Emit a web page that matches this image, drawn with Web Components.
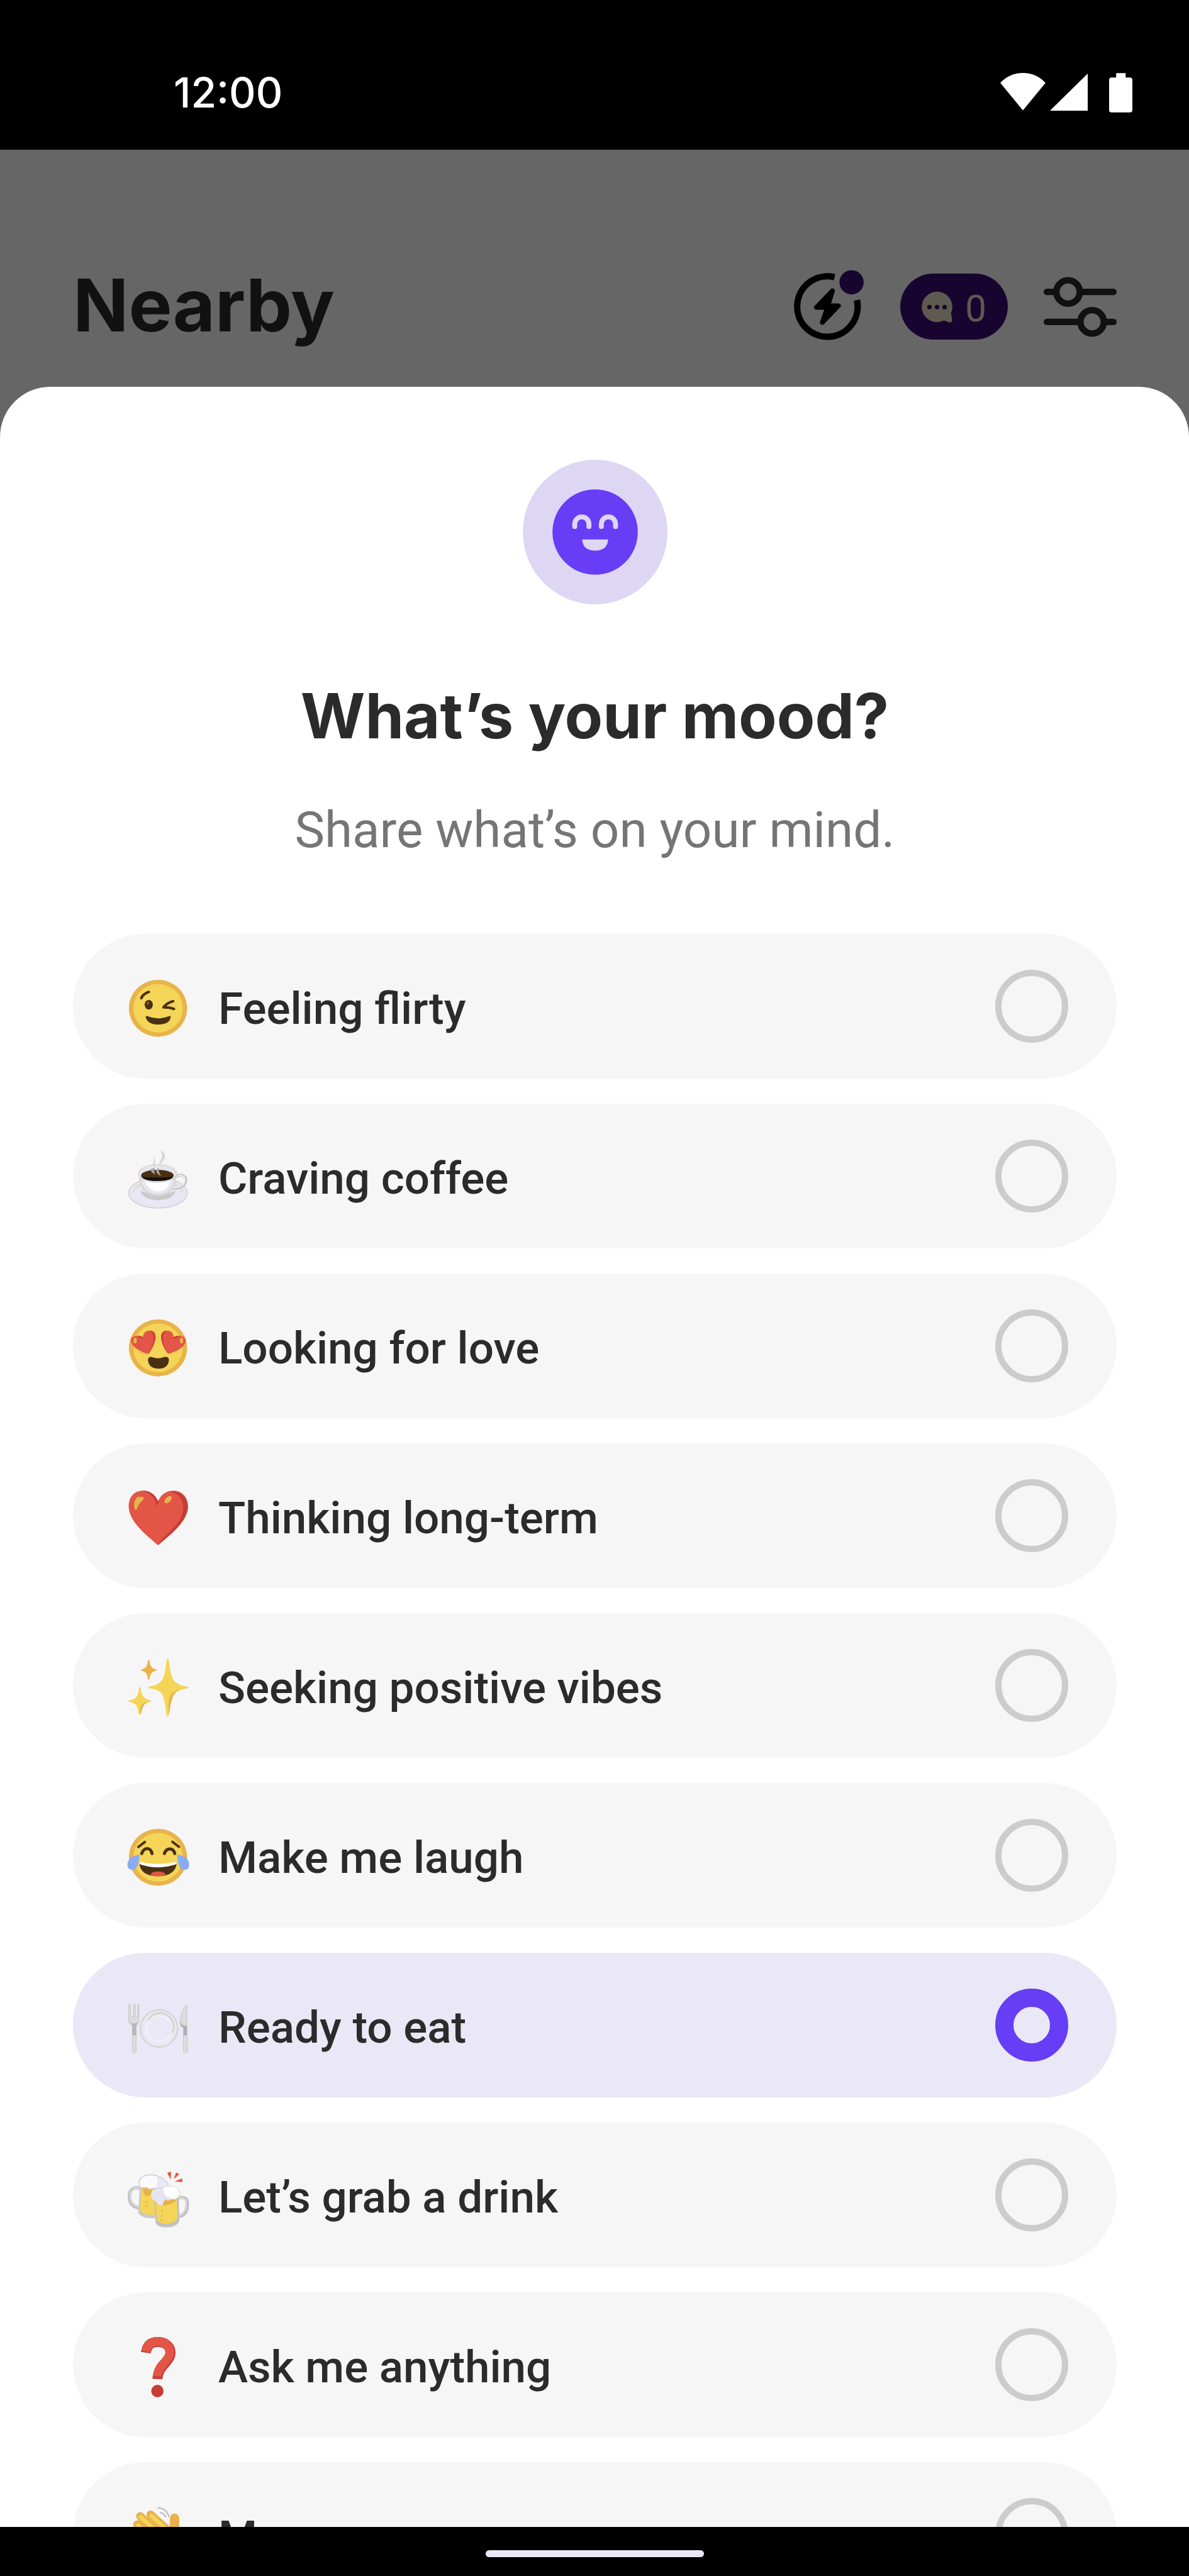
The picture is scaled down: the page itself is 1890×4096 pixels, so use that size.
<!DOCTYPE html>
<html lang="en">
<head>
<meta charset="utf-8">
<meta name="viewport" content="width=device-width, initial-scale=1">
<title>Nearby</title>
<style>
  html, body {
    margin: 0;
    height: 100%;
    background: #000;
  }

  body {
    font-family: Roboto, "Liberation Sans", sans-serif;
    color: #2b2b2b;
  }
</style>
</head>
<body>

<mood-app>
  <status-bar slot="status">12:00</status-bar>
  <nearby-header slot="header" count="0">Nearby</nearby-header>

  <mood-sheet>
    <span slot="title">What’s your mood?</span>
    <span slot="subtitle">Share what’s on your mind.</span>

    <mood-list>
      <mood-option><mood-emoji slot="icon" name="wink"></mood-emoji>Feeling flirty</mood-option>
      <mood-option><mood-emoji slot="icon" name="coffee"></mood-emoji>Craving coffee</mood-option>
      <mood-option><mood-emoji slot="icon" name="heart-eyes"></mood-emoji>Looking for love</mood-option>
      <mood-option><mood-emoji slot="icon" name="heart"></mood-emoji>Thinking long-term</mood-option>
      <mood-option><mood-emoji slot="icon" name="sparkles"></mood-emoji>Seeking positive vibes</mood-option>
      <mood-option><mood-emoji slot="icon" name="laugh"></mood-emoji>Make me laugh</mood-option>
      <mood-option checked><mood-emoji slot="icon" name="plate"></mood-emoji>Ready to eat</mood-option>
      <mood-option><mood-emoji slot="icon" name="beers"></mood-emoji>Let’s grab a drink</mood-option>
      <mood-option><mood-emoji slot="icon" name="question"></mood-emoji>Ask me anything</mood-option>
      <mood-option><mood-emoji slot="icon" name="wave"></mood-emoji>M</mood-option>
    </mood-list>
  </mood-sheet>

  <home-indicator slot="nav"></home-indicator>
</mood-app>

<script>
const FACE = `
  <ellipse cx="150" cy="150" rx="141" ry="138" fill="#e8b34a"/>
  <ellipse cx="150" cy="150" rx="120" ry="118" fill="#f4d557"/>`;

const HEART_EYE = `
  <path d="M105 179C75 172 20 150 19 115C18 92 50 85 78 98C76 74 100 62 120 68C152 80 138 130 105 179Z" fill="#e25547"/>
  <path d="M105 179C138 130 152 80 120 68L110 66C134 78 132 110 124 135Q118 155 105 179Z" fill="#c63d35"/>
  <path d="M50 91Q64 90 78 98L80 104Q70 108 50 91Z" fill="#c63d35"/>
  <ellipse cx="39" cy="115" rx="8" ry="14" fill="#e8b34a"/>`;

const TEAR = `<path d="M60 138C58 170 54 211 23 211C10 211 2 201 2 186C2 160 22 140 60 138Z" fill="#8babf1"/>`;

// every emoji is drawn on a 305 x 305 board
const EMOJI = {
  wink: `${FACE}
    <path d="M69 101Q78 80 105 71" fill="none" stroke="#4a3013" stroke-width="13" stroke-linecap="round"/>
    <ellipse cx="105" cy="133" rx="20" ry="23" fill="#4a3013"/>
    <ellipse cx="101" cy="125" rx="5" ry="7" fill="#8a6a3a"/>
    <path d="M223 116Q197 122 177 145Q205 144 227 153" fill="none" stroke="#4a3013" stroke-width="13" stroke-linecap="round" stroke-linejoin="round"/>
    <path d="M91 196Q88 184 101 189Q150 209 201 189Q214 184 211 197Q203 229 151 229Q101 229 91 196Z" fill="#4a3013"/>`,

  coffee: `
    <path d="M165 19C192 34 182 58 164 76Q152 90 150 110C150 82 172 60 172 42Q172 30 165 19Z" fill="#d6d6d4" stroke="#d6d6d4" stroke-width="4"/>
    <path d="M128 49C144 58 134 80 133 100L124 100C122 78 134 68 128 49Z" fill="#dcdcdc"/>
    <ellipse cx="150" cy="222" rx="142" ry="73" fill="#e9e7f4" stroke="#d0d0d0" stroke-width="5"/>
    <ellipse cx="150" cy="214" rx="122" ry="55" fill="#dededc"/>
    <ellipse cx="150" cy="224" rx="117" ry="48" fill="#e9e7f4"/>
    <path d="M64 212Q150 245 236 212Q220 257 150 257Q80 257 64 212Z" fill="#c9c9c9"/>
    <path d="M232 145C262 126 288 140 284 166C280 190 250 200 222 201" fill="none" stroke="#c4c4c4" stroke-width="14"/>
    <path d="M232 145C262 128 284 142 280 164C276 186 250 196 222 198" fill="none" stroke="#ececf2" stroke-width="6"/>
    <path d="M55 125L61 170Q74 236 150 236Q222 236 235 170L241 125Z" fill="#d8d8d6"/>
    <path d="M68 160Q84 225 150 228Q212 225 228 160Z" fill="#e9e7f4"/>
    <path d="M88 164Q104 214 150 214Q196 214 208 164Z" fill="#fff"/>
    <ellipse cx="148" cy="128" rx="92" ry="43" fill="#e6e5ee" stroke="#d2d2d2" stroke-width="4"/>
    <ellipse cx="147" cy="137" rx="79" ry="27" fill="#4a3013"/>
    <path d="M70 143Q147 152 224 143Q210 164 147 164Q84 164 70 143Z" fill="#131110"/>
    <path d="M112 108Q118 124 136 133Q130 118 132 100M140 112Q142 132 166 141Q152 126 154 100" fill="#a6a29c"/>`,

  'heart-eyes': `${FACE}
    <path d="M50 165Q75 186 105 179Z" fill="#e8b34a"/>
    ${HEART_EYE}
    <g transform="matrix(-1 0 0 1 303 0)">${HEART_EYE}</g>
    <path d="M101 208Q104 190 122 195Q151 206 182 194Q202 192 203 208Q200 251 151 251Q104 249 101 208Z" fill="#4a3013"/>`,

  heart: `
    <path d="M150 284C110 245 8 175 8 95C8 50 35 19 76 19C112 19 138 40 150 71C162 40 190 19 224 19C265 19 295 50 295 95C295 175 190 245 150 284Z" fill="#e25547"/>
    <path d="M90 20C118 24 140 44 150 71L156 62Q152 84 143 92C136 60 118 28 70 20Z" fill="#c63d35"/>
    <path d="M206 21C264 20 295 50 295 95C295 170 200 240 152 282Q160 262 178 246C226 204 270 160 272 104C274 60 250 34 206 21Z" fill="#c63d35"/>
    <path d="M52 49H80V62Q56 80 46 111H38Q26 70 52 49Z" fill="#e8b34a"/>
    <ellipse cx="199" cy="63" rx="12" ry="22" fill="#e8b34a" transform="rotate(45 199 63)"/>`,

  sparkles: `
    <path d="M192 16Q197 7 202 16C210 70 212 106 236 126Q258 142 292 146Q300 150 292 154C250 162 234 170 222 194Q212 216 202 286Q197 294 192 286C182 214 178 190 164 174Q146 158 108 154Q98 150 108 146C146 138 164 128 176 102Q184 82 192 16Z" fill="#f4d557"/>
    <path d="M270 157C244 164 234 172 222 194Q212 216 203 284Q198 230 206 198Q214 168 270 157Z" fill="#e8b34a"/>
    <path d="M58 151Q62 145 66 151C70 190 80 206 114 213Q120 216 114 219C82 226 74 234 68 279Q62 286 56 279C52 240 44 226 9 219Q3 216 9 213C44 206 54 194 58 151Z" fill="#f4d557"/>
    <path d="M108 220C82 226 74 240 68 279Q62 276 64 250Q68 222 108 220Z" fill="#e8b34a"/>
    <path d="M101 19Q105 14 109 19C112 48 118 56 141 63Q147 66 141 69C118 76 113 82 109 109Q105 114 101 109C98 82 92 76 70 69Q64 66 70 63C92 56 98 48 101 19Z" fill="#e8b34a"/>`,

  laugh: `${FACE}
    <path d="M55 100L86 76M220 75L251 99" stroke="#4a3013" stroke-width="12" stroke-linecap="round"/>
    <path d="M71 132Q79 108 99 108Q117 110 121 132M181 132Q188 110 207 110Q226 110 231 132" fill="none" stroke="#4a3013" stroke-width="15" stroke-linecap="round"/>
    ${TEAR}
    <g transform="matrix(-1 0 0 1 303 0)">${TEAR}</g>
    <path d="M60 178C62 224 100 242 150 242C204 242 238 220 240 178Q150 210 60 178Z" fill="#4a3013"/>
    <path d="M114 234Q120 219 150 219Q180 219 188 233Q172 242 150 242Q128 242 114 234Z" fill="#e25547"/>
    <path d="M60 172Q150 192 240 172Q242 182 232 186Q150 212 68 186Q58 182 60 172Z" fill="#fff"/>`,

  plate: `
    <path d="M8 40V118Q8 136 26 142V268Q33 284 44 268V142Q58 136 58 118V40Q54 34 51 44V98L40 102V40Q35 34 30 40V102L16 98V44Q12 34 8 40Z" fill="#dcdcdc" stroke="#c6c6c6" stroke-width="3"/>
    <path d="M14 124Q30 142 52 124L44 146V190H26V146Z" fill="#b8b8b8"/>
    <circle cx="155" cy="157" r="90" fill="#ebe9f4" stroke="#d0d0ce" stroke-width="6"/>
    <circle cx="155" cy="157" r="80" fill="none" stroke="#e2e2e2" stroke-width="3"/>
    <circle cx="157" cy="158" r="61" fill="#eae8f6" stroke="#f6f6fa" stroke-width="4"/>
    <path d="M102 118A64 64 0 0 1 218 178" fill="none" stroke="#d2d2d0" stroke-width="8"/>
    <path d="M290 40Q258 70 257 132Q258 146 273 153V268Q282 284 294 268L290 153Z" fill="#dcdcdc" stroke="#c6c6c6" stroke-width="3"/>
    <path d="M258 128Q272 146 290 144V190H274V153Q258 148 258 128Z" fill="#b0b0b0"/>`,

  beers: `
    <path d="M64 108Q18 98 12 140Q6 196 60 204" fill="none" stroke="#c4c4c4" stroke-width="17"/>
    <path d="M64 108Q24 100 18 140Q14 188 60 198" fill="none" stroke="#dcdcdc" stroke-width="8"/>
    <path d="M62 96L54 226Q64 256 140 254V100Z" fill="#c9c9c9"/>
    <path d="M70 96L62 216Q80 240 136 238V100Z" fill="#f4d557"/>
    <path d="M74 104H120V128Q112 150 94 146Q78 142 74 104Z" fill="#e8b34a"/>
    <path d="M246 156Q290 144 292 180Q294 244 246 244" fill="none" stroke="#c4c4c4" stroke-width="17"/>
    <path d="M246 158Q284 150 286 180Q286 234 246 238" fill="none" stroke="#dcdcdc" stroke-width="8"/>
    <path d="M130 150L138 274Q146 298 190 298Q244 296 254 266L250 140Z" fill="#c1c1c1"/>
    <path d="M137 150L145 262Q164 284 196 281Q234 276 244 254L240 140Z" fill="#f4d557"/>
    <path d="M172 166L236 150V170Q206 194 172 190Z" fill="#e8b34a"/>
    <path d="M60 100Q52 62 78 52Q94 40 122 44Q142 42 154 54Q176 54 182 70Q202 78 198 100L120 110Q108 118 96 104Q76 110 60 100Z" fill="#fbfbfd" stroke="#d0d0d0" stroke-width="5"/>
    <path d="M144 56Q170 56 180 70Q198 78 194 98H138Q156 78 144 56Z" fill="#e9e7f4"/>
    <path d="M118 152Q110 128 130 116Q150 102 176 106Q190 94 216 98Q246 98 252 122Q260 150 244 154Q230 168 214 160Q200 176 186 160Q178 172 172 188Q152 196 146 176Q130 172 118 152Z" fill="#e6e4f3"/>
    <path d="M172 108Q190 94 216 98Q246 98 252 122Q260 150 244 154Q230 166 214 160Q176 154 172 108Z" fill="#fff" stroke="#d8d8d8" stroke-width="3"/>
    <path d="M88 176L98 170M92 200L98 192M166 220L174 212M168 244L172 238M164 266L172 258" stroke="#e8b34a" stroke-width="6"/>
    <path d="M196 34L212 29L210 62ZM238 33L252 40L228 62ZM234 75L266 62L267 77Z" fill="#e9503f" stroke="#e9503f" stroke-width="2"/>`,

  question: `
    <path d="M91 82C97 44 118 30 148 30C186 30 211 52 211 82C211 128 150 144 147 210" fill="none" stroke="#c63d35" stroke-width="48"/>
    <path d="M91 77C97 42 118 28 148 28C182 28 207 50 207 80C207 122 150 138 147 196" fill="none" stroke="#e25547" stroke-width="42"/>
    <circle cx="147" cy="268" r="30" fill="#c63d35"/>`,

  wave: `
    <g fill="none" stroke-linecap="round">
      <path d="M150 11Q190 12 202 52M162 34Q180 38 186 54" stroke="#bcbcc4" stroke-width="7"/>
      <path d="M230 62V140" stroke="#e8b34a" stroke-width="46"/>
      <path d="M50 92L150 190M64 52L180 160M114 44L220 140" stroke="#e8b34a" stroke-width="40"/>
      <path d="M54 96L150 190M66 56L180 160M118 50L220 140" stroke="#f4d557" stroke-width="20"/>
    </g>`,
};

function define(name, html, setup) {
  const template = document.createElement('template');
  template.innerHTML = html;

  customElements.define(name, class extends HTMLElement {
    constructor() {
      super();
      this.attachShadow({ mode: 'open' }).append(template.content.cloneNode(true));
    }

    connectedCallback() {
      if (setup) {
        setup(this, this.shadowRoot);
      }
    }
  });
}

define('mood-app', `
  <style>
    :host {
      display: flex;
      flex-direction: column;
      height: 100vh;
      overflow: hidden;
    }

    main {
      flex: 1;
      min-height: 0;
      display: flex;
      flex-direction: column;
      background: #666;
    }
  </style>
  <slot name="status"></slot>
  <main>
    <slot name="header"></slot>
    <slot></slot>
  </main>
  <slot name="nav"></slot>
`);

define('status-bar', `
  <style>
    :host {
      box-sizing: border-box;
      flex: none;
      display: flex;
      align-items: center;
      justify-content: space-between;
      height: 238px;
      padding: 56px 90px 0 276px;
      background: #000;
      color: #fff;
      font: 500 66px/80px Inter, sans-serif;
    }

    .icons { display: flex; gap: 7px; }
    .battery { margin-left: 27px; }
    svg { display: block; fill: #fff; }
  </style>
  <time><slot></slot></time>
  <div class="icons">
    <svg width="72" height="63" viewBox="0 0 73 64"><path d="M0 16Q15 0 36.500 0T73 16L36.500 60.500Z"/></svg>
    <svg width="60" height="63" viewBox="0 0 61 64"><path d="M61 1V61H0Z"/></svg>
    <svg class="battery" width="37" height="63" viewBox="0 0 38 64"><path d="M11.500 0H27V7H34Q38 7 38 11V60Q38 64 34 64H4Q0 64 0 60V11Q0 7 4 7H11.500Z"/></svg>
  </div>
`);

define('nearby-header', `
  <style>
    :host {
      flex: none;
      display: flex;
      align-items: center;
      justify-content: space-between;
      padding: 190px 115px 68px 116px;
    }

    h1 {
      margin: 0;
      padding-bottom: 6px;
      color: #111;
      font: 700 116px/112px Inter, sans-serif;
    }

    .actions {
      display: flex;
      align-items: center;
      gap: 57px;
    }

    button {
      display: flex;
      align-items: center;
      margin: 0;
      padding: 0;
      border: 0;
      background: none;
    }

    .chats {
      gap: 20px;
      height: 105px;
      padding: 0 34px;
      border-radius: 53px;
      background: #18052f;
      color: #5f5a50;
      font: 400 60px/60px Roboto, sans-serif;
    }

    .count { padding-top: 6px; }
    svg { display: block; }
  </style>
  <h1><slot></slot></h1>
  <div class="actions">
    <button type="button" aria-label="Boost">
      <svg width="112" height="119" viewBox="0 0 342 364">
        <path d="M197 39A147 147 0 1 0 306 150" fill="none" stroke="#000" stroke-width="31"/>
        <path d="M187 105L109 186H163L138 259L216 178H165Z" stroke="#000" stroke-width="23" stroke-linejoin="round"/>
        <circle cx="280" cy="64" r="59" fill="#18052f"/>
      </svg>
    </button>
    <button type="button" class="chats" aria-label="Chats">
      <svg width="49" height="50" viewBox="0 0 150 152">
        <path d="M75 2A74 74 0 1 0 108 142L136 152Q148 150 149 140L143 106A74 74 0 0 0 75 2Z" fill="#5f5a50"/>
        <g fill="#18052f"><circle cx="38" cy="77" r="11"/><circle cx="75" cy="77" r="11"/><circle cx="112" cy="77" r="11"/></g>
      </svg>
      <span class="count"></span>
    </button>
    <button type="button" aria-label="Filters">
      <svg width="116" height="98" viewBox="0 0 118 100" fill="none" stroke="#111" stroke-width="10.500" stroke-linecap="round">
        <path d="M5 25.700H20M58 25.700H113M5 74.300H59M98 74.300H113"/>
        <circle cx="39.400" cy="25.700" r="19"/>
        <circle cx="78.400" cy="74.300" r="19"/>
      </svg>
    </button>
  </div>
`, (host, root) => {
  root.querySelector('.count').textContent = host.getAttribute('count');
});

define('mood-sheet', `
  <style>
    :host {
      flex: 1;
      min-height: 0;
      display: flex;
      flex-direction: column;
      align-items: center;
      padding: 116px 115px 0 116px;
      border-radius: 80px 80px 0 0;
      background: #fff;
      overflow: hidden;
    }

    svg { flex: none; display: block; }

    h2 {
      flex: none;
      margin: 117px 0 0;
      font: 700 99px/120px Inter, sans-serif;
    }

    p {
      flex: none;
      margin: 72px 0 115px;
      color: #757575;
      font-size: 80px;
      line-height: 100px;
    }
  </style>
  <svg width="230" height="230" viewBox="0 0 234 234" aria-hidden="true">
    <circle cx="117" cy="117" r="117" fill="#ddd7f3"/>
    <circle cx="117" cy="117" r="69" fill="#673df5"/>
    <path d="M84 108V104A11.500 11.500 0 0 1 107 104V108M127 108V104A11.500 11.500 0 0 1 150 104V108" fill="none" stroke="#ddd7f3" stroke-width="8" stroke-linecap="round"/>
    <path d="M96 129H138Q137 147 117 147T96 129Z" fill="#ddd7f3"/>
  </svg>
  <h2><slot name="title"></slot></h2>
  <p><slot name="subtitle"></slot></p>
  <slot></slot>
`);

define('mood-list', `
  <style>
    :host {
      flex: none;
      align-self: stretch;
      display: flex;
      flex-direction: column;
      gap: 40px;
    }
  </style>
  <slot></slot>
`, (host) => {
  host.setAttribute('role', 'radiogroup');

  // each radio sits in its own shadow root, so the list keeps them exclusive
  host.addEventListener('mood-change', (event) => {
    for (const option of host.querySelectorAll('mood-option')) {
      option.shadowRoot.querySelector('input').checked = option === event.target;
    }
  });
});

define('mood-option', `
  <style>
    :host { display: block; }

    label {
      box-sizing: border-box;
      display: flex;
      align-items: center;
      justify-content: space-between;
      height: 230px;
      padding: 0 77px 0 86px;
      border-radius: 115px;
      background: #f6f6f6;
      font-size: 71px;
      font-weight: 500;
      line-height: 80px;
    }

    label:has(input:checked) { background: #eae8f6; }

    .text {
      display: flex;
      align-items: center;
      gap: 45px;
      padding-top: 8px;
    }

    input {
      appearance: none;
      box-sizing: border-box;
      flex: none;
      width: 116px;
      height: 116px;
      margin: 0;
      border: 10px solid #ccc;
      border-radius: 50%;
    }

    input:checked { border: 29px solid #673df5; }
  </style>
  <label>
    <span class="text"><slot name="icon"></slot><span><slot></slot></span></span>
    <input type="radio" name="mood">
  </label>
`, (host, root) => {
  const input = root.querySelector('input');

  input.checked = host.hasAttribute('checked');
  input.addEventListener('change', () => {
    host.dispatchEvent(new CustomEvent('mood-change', { bubbles: true }));
  });
});

define('mood-emoji', `
  <style>
    :host { display: block; }
    svg { display: block; }
  </style>
  <svg width="100" height="100" viewBox="0 0 305 305" aria-hidden="true"></svg>
`, (host, root) => {
  root.querySelector('svg').innerHTML = EMOJI[host.getAttribute('name')] || '';
});

define('home-indicator', `
  <style>
    :host {
      flex: none;
      display: flex;
      justify-content: center;
      height: 41px;
      padding-top: 37px;
      background: #000;
    }

    div {
      width: 347px;
      height: 11px;
      border-radius: 6px;
      background: #eae8f6;
    }
  </style>
  <div></div>
`);
</script>
</body>
</html>
